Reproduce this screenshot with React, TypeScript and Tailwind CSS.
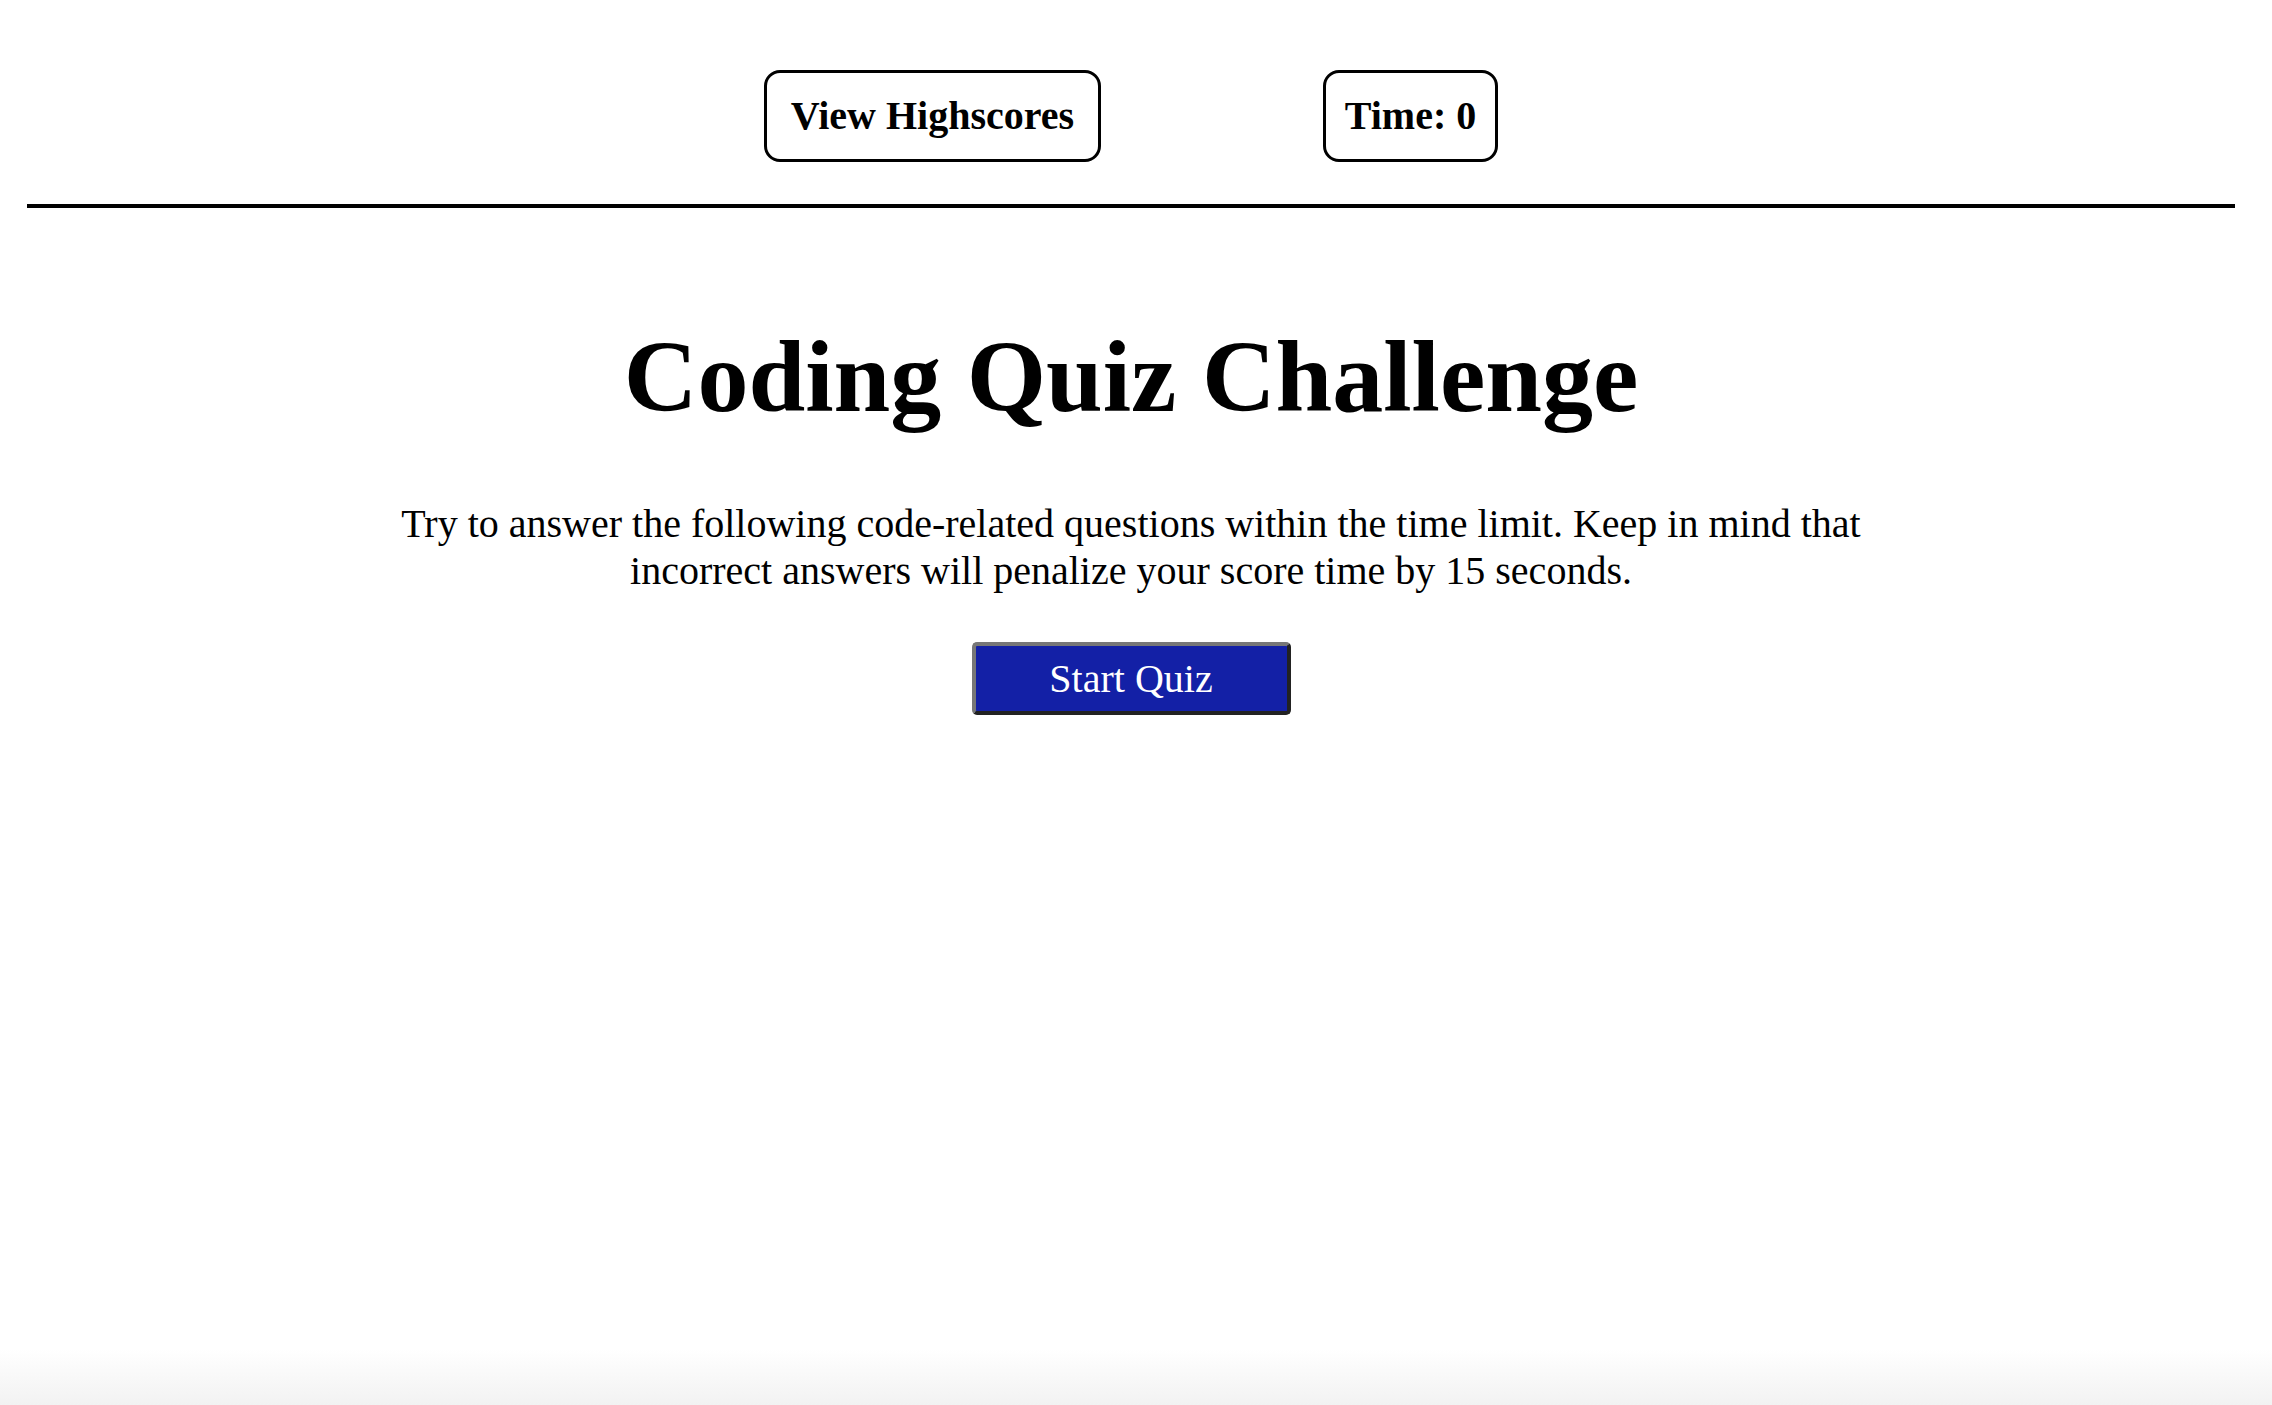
import React from "react";

const App = () => {
  return (
    <div className="min-h-screen bg-[linear-gradient(to_bottom,#ffffff_96%,#f2f2f2)] font-['Liberation_Serif',serif] text-black">
      <div className="mr-[10px]">
        <header className="flex justify-center gap-[222px] pt-[70px] pb-[42px]">
          <button className="w-[337px] h-[92px] border-[3px] border-black rounded-[16px] text-[40px] font-bold bg-white">
            View Highscores
          </button>
          <button className="w-[175px] h-[92px] border-[3px] border-black rounded-[16px] text-[40px] font-bold bg-white">
            Time: 0
          </button>
        </header>
        <hr className="mx-[27px] border-t-4 border-black" />
        <main className="flex flex-col items-center">
          <h1 className="mt-[118px] text-[102px] leading-[1] font-bold">
            Coding Quiz Challenge
          </h1>
          <p className="mt-[72px] max-w-[1560px] text-center text-[40px] leading-[47px]">
            Try to answer the following code-related questions within the time
            limit. Keep in mind that incorrect answers will penalize your score
            time by 15 seconds.
          </p>
          <button className="mt-[48px] w-[319px] h-[73px] bg-[#1320a6] text-white text-[40px] rounded-[5px] border-4 border-t-[#777777] border-l-[#777777] border-r-[#222222] border-b-[#222222]">
            Start Quiz
          </button>
        </main>
      </div>
    </div>
  );
};

export default App;
